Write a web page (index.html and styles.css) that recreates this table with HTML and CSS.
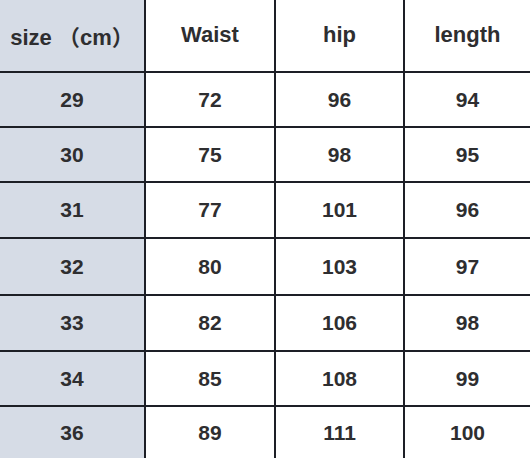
FILE: index.html
```html
<!DOCTYPE html>
<html>
<head>
<meta charset="utf-8">
<link rel="stylesheet" href="styles.css">
</head>
<body>
<div class="chart">
  <div class="cell key head">size （cm）</div>
  <div class="cell head">Waist</div>
  <div class="cell head">hip</div>
  <div class="cell head">length</div>

  <div class="cell key">29</div><div class="cell">72</div><div class="cell">96</div><div class="cell">94</div>
  <div class="cell key">30</div><div class="cell">75</div><div class="cell">98</div><div class="cell">95</div>
  <div class="cell key">31</div><div class="cell">77</div><div class="cell">101</div><div class="cell">96</div>
  <div class="cell key">32</div><div class="cell">80</div><div class="cell">103</div><div class="cell">97</div>
  <div class="cell key">33</div><div class="cell">82</div><div class="cell">106</div><div class="cell">98</div>
  <div class="cell key">34</div><div class="cell">85</div><div class="cell">108</div><div class="cell">99</div>
  <div class="cell key">36</div><div class="cell">89</div><div class="cell">111</div><div class="cell">100</div>
</div>
</body>
</html>
```
FILE: styles.css
```css
html, body {
  margin: 0;
  padding: 0;
  background: #ffffff;
  overflow: hidden;
}

.chart {
  width: 530px;
  height: 458px;
  display: grid;
  grid-template-columns: 144px 128px 127px 125px;
  grid-template-rows: 71px 53px 53px 54px 55px 54px 53px 1fr;
  column-gap: 2px;
  row-gap: 2px;
  background: #1d1f26;
  overflow: hidden;
}

.cell {
  background: #ffffff;
  display: flex;
  align-items: center;
  justify-content: center;
  font-family: "Liberation Sans", Arial, "Noto Sans CJK SC", sans-serif;
  font-weight: bold;
  font-size: 21px;
  color: #2e2e30;
  white-space: pre;
}

.head {
  font-size: 22px;
  padding-bottom: 1px;
}

.key {
  background: #d6dce6;
}
```
